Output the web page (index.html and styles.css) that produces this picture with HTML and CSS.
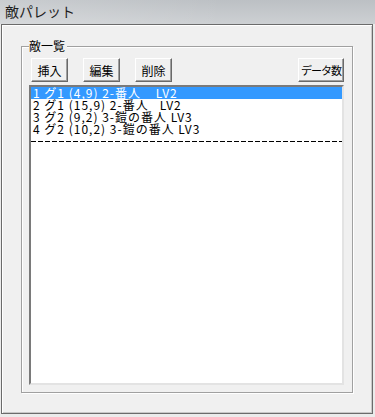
FILE: index.html
```html
<!DOCTYPE html>
<html lang="ja">

<head>
    <meta charset="UTF-8">
    <title>敵パレット</title>
    <link rel="stylesheet" href="styles.css">
</head>

<body>

    <div class="titlebar">敵パレット</div>

    <div class="window">
        <fieldset class="group">
            <legend>敵一覧</legend>

            <div class="toolbar">
                <button class="btn">挿入</button>
                <button class="btn">編集</button>
                <button class="btn">削除</button>
                <button class="btn btn-count">データ数</button>
            </div>

            <ul class="enemy-list">
                <li class="selected">1 グ1 (4,9) 2-番人    LV2</li>
                <li>2 グ1 (15,9) 2-番人   LV2</li>
                <li>3 グ2 (9,2) 3-鎧の番人 LV3</li>
                <li>4 グ2 (10,2) 3-鎧の番人 LV3</li>
                <li class="separator"></li>
            </ul>
        </fieldset>
    </div>

</body>

</html>
```

FILE: styles.css
```css
* {
    box-sizing: border-box;
}

body {
    margin: 0;
    width: 375px;
    height: 417px;
    overflow: hidden;
    background-color: #ebebeb;
    font-family: "Noto Sans CJK JP", "Noto Sans", sans-serif;
    font-size: 12px;
    color: #000;
}

.titlebar {
    height: 24px;
    line-height: 22px;
    padding-left: 5px;
    font-size: 14px;
    color: #1e1e1e;
    background: linear-gradient(to right, rgba(255, 255, 255, 0.2), rgba(255, 255, 255, 0) 60%),
        linear-gradient(#bcc0c4, #cdd0d3);
}

.window {
    margin-left: 1px;
    width: 372px;
    height: 390px;
    border: 1px solid #6b6b6b;
    background-color: #f0f0f0;
    padding: 13px 0 0 19px;
    box-shadow: inset 1px 1px 0 #ffffff, inset -1px -1px 0 #c8c8c8;
}

.group {
    margin: 0;
    width: 332px;
    height: 355px;
    padding: 4px 8px 0 7px;
    border: 1px solid #a0a0a0;
    box-shadow: 1px 1px 0 #ffffff, inset 1px 1px 0 #ffffff;
    min-inline-size: 0;
}

.group legend {
    padding: 0 2px 0 0;
    font-size: 12px;
    line-height: 16px;
    background-color: #f0f0f0;
}

.toolbar {
    display: flex;
    height: 24px;
    padding-left: 2px;
}

.btn {
    width: 37px;
    height: 24px;
    margin-right: 15px;
    padding: 0;
    font-family: inherit;
    font-size: 12px;
    color: #000;
    background-color: #f0f0f0;
    border: 1px solid;
    border-color: #ffffff #696969 #696969 #ffffff;
    box-shadow: inset -1px -1px 0 #a0a0a0;
}

.btn-count {
    width: 46px;
    margin: 0 0 0 auto;
    font-size: 11px;
    letter-spacing: -1px;
}

.enemy-list {
    list-style: none;
    margin: 3px 0 0;
    padding: 0;
    height: 300px;
    background-color: #ffffff;
    border: 2px solid;
    border-color: #7a7a7a #e3e3e3 #e3e3e3 #7a7a7a;
}

.enemy-list li {
    height: 12px;
    line-height: 12px;
    padding-left: 2px;
    white-space: pre;
    letter-spacing: 1px;
}

.enemy-list .selected {
    background-color: #3399ff;
    color: #ffffff;
}

.enemy-list .separator {
    background: repeating-linear-gradient(to right, #000 0 5px, transparent 5px 7px) 0 6px / 100% 1px no-repeat;
}
```
